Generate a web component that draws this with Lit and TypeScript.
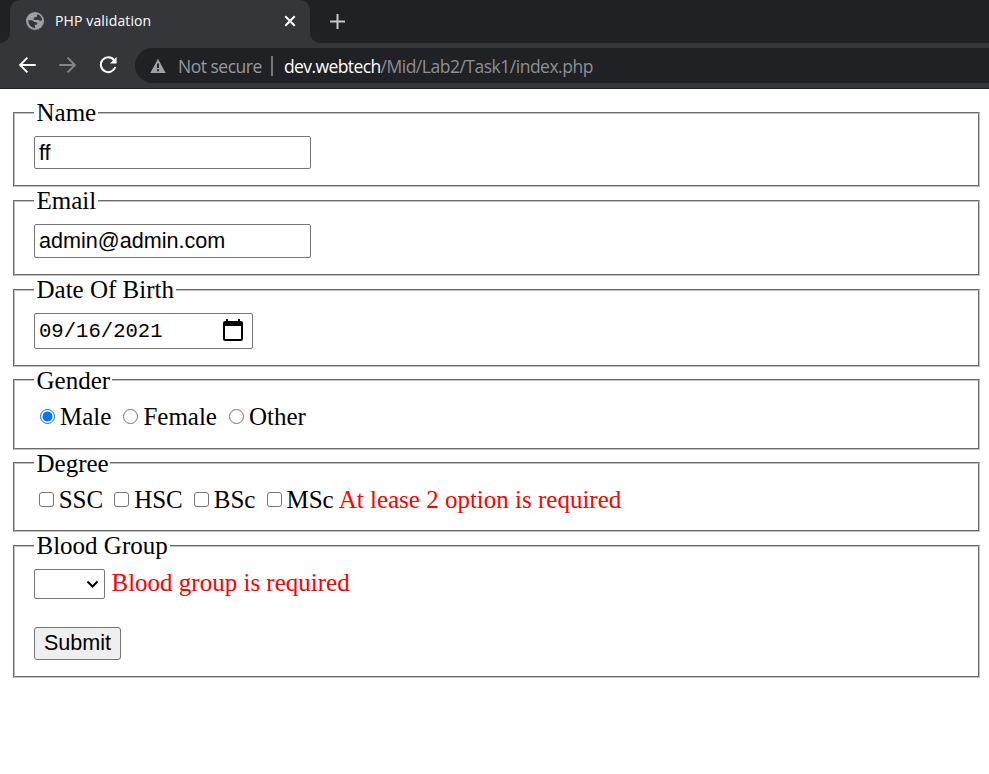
import { LitElement, html, css, svg } from "lit";
import { customElement } from "lit/decorators.js";

@customElement("browser-bar")
class BrowserBar extends LitElement {
  static styles = css`
    :host { display: block; height: 89px; background: #35363a; font-family: "Open Sans", sans-serif; }
    .tabs { height: 43px; display: flex; background: #202124; }
    .edge { width: 10px; background: #35363a; overflow: hidden; }
    .edge i { display: block; height: 43px; background: #202124; }
    .edge .l { border-bottom-right-radius: 10px; }
    .edge .r { border-bottom-left-radius: 10px; }
    .tab { box-sizing: border-box; width: 300px; background: #35363a; border-radius: 10px 10px 0 0; display: flex; align-items: center; padding: 0 13px 2px 15px; color: #fff; }
    .title { flex: 1; margin-left: 10px; font-size: 14px; letter-spacing: 0.13px; line-height: 20px; }
    svg { display: block; flex: none; }
    .plus { margin: 13px 0 0 9px; }
    .tools { display: flex; height: 45px; align-items: center; border-bottom: 1px solid #242528; padding-left: 18px; }
    .fwd { margin-left: 21px; }
    .reload { margin-left: 21px; }
    .omni { flex: 1; height: 35px; margin: 0 0 0 15px; background: #202124; border-radius: 18px 0 0 18px; display: flex; align-items: center; font-size: 17.5px; line-height: 26px; color: #8d9094; white-space: pre; }
    .warn { margin-left: 15px; }
    .ns { margin-left: 12px; width: 93px; color: #969a9f; letter-spacing: -0.5px; }
    .sep { width: 2px; height: 20px; background: #77797d; }
    .url { margin-left: 11px; letter-spacing: -0.49px; }
    .url b { font-weight: 400; color: #fff; letter-spacing: -0.6px; }
  `;
  render() {
    return html`
      <div class="tabs">
        <div class="edge"><i class="l"></i></div>
        <div class="tab">
          ${svg`<svg width="20" height="20" viewBox="0 0 20 20"><circle cx="10" cy="10" r="9" fill="#9aa0a6"/><path d="M12.4 3.2 Q16.4 4.5 17.2 8.9 L15.1 10 L13.2 8.7 L10.8 9 L8.2 8.5 L9.1 6.5 L11.6 6 Z M3 9.2 H7.1 L9.3 11 L12.1 11.4 L12.3 13.2 L9.7 14.2 L10.3 17.2 Q4.2 16.8 3 9.2Z" fill="#35363a"/></svg>`}
          <span class="title">PHP validation</span>
          ${svg`<svg width="14" height="14" viewBox="0 0 14 14"><path d="M2.3 2.3L11.7 11.7M11.7 2.3L2.3 11.7" stroke="#fff" stroke-width="2"/></svg>`}
        </div>
        <div class="edge"><i class="r"></i></div>
        ${svg`<svg class="plus" width="16" height="16" viewBox="0 0 16 16"><path d="M8.5 1V16M1 8.5H16" stroke="#c8c9cb" stroke-width="2"/></svg>`}
      </div>
      <div class="tools">
        ${svg`<svg width="19" height="19" viewBox="0 0 19 19"><path d="M17.7 9H2.8M9.4 1.7L2.1 9L9.4 16.3" fill="none" stroke="#fff" stroke-width="1.9"/></svg>`}
        ${svg`<svg class="fwd" width="19" height="19" viewBox="0 0 19 19"><path d="M1.3 9H16.2M9.6 1.7L16.9 9L9.6 16.3" fill="none" stroke="#85868a" stroke-width="1.9"/></svg>`}
        ${svg`<svg class="reload" width="22" height="19" viewBox="0 0 22 19"><path d="M16.1 4.2A7.4 7.4 0 1 0 17.3 11" fill="none" stroke="#fff" stroke-width="2"/><path d="M18.6 1V7.6H12Z" fill="#fff"/></svg>`}
        <div class="omni">
          ${svg`<svg class="warn" width="16" height="16" viewBox="0 0 16 16"><path d="M8 .8L15.7 15H.3Z" fill="#9aa0a6"/><path d="M8 5.6V10M8 11.3V13.2" stroke="#202124" stroke-width="1.9"/></svg>`}
          <span class="ns">Not secure</span><span class="sep"></span><span class="url"><b>dev.webtech</b>/Mid/Lab2/Task1/index.php</span>
        </div>
      </div>`;
  }
}

@customElement("app-root")
export class AppRoot extends LitElement {
  static styles = css`
    :host { display: block; height: 774px; overflow: hidden; background: #fff; color: #000; font: 25px/28px "Liberation Serif", serif; }
    form { padding: 11px 9px 0 13px; }
    fieldset { box-sizing: border-box; margin: 0; min-width: 0; border: 2px groove rgb(192, 192, 192); padding: 0 19px; }
    legend { height: 26px; line-height: 26px; padding: 0 1.8px 0 2.5px; white-space: nowrap; }
    .name { height: 87px; margin-bottom: 1px; }
    .email { height: 88px; margin-bottom: 1px; }
    .dob { height: 90px; }
    .gender { height: 83px; }
    .degree { height: 82px; margin-bottom: 1px; }
    .gender legend, .degree legend { line-height: 28px; }
    .blood { height: 145px; }
    input, button, .select, .date { box-sizing: border-box; display: block; margin: 0; border: 1px solid #767676; border-radius: 2px; background: #fff; color: #000; font: 21.6px "Liberation Sans", sans-serif; outline: 0; appearance: none; }
    .text { width: 277px; height: 34px; padding: 0 4px; margin-top: 10px; }
    .name .text { height: 33px; }
    .date { display: flex; align-items: center; width: 219px; height: 36px; margin-top: 10px; padding: 0 8px 0 4px; justify-content: space-between; font: 20.6px "Liberation Mono", monospace; white-space: pre; }
    .date svg { margin-bottom: 2px; }
    .row { display: flex; align-items: center; height: 28px; white-space: pre; }
    .gender .row { margin-top: 10px; padding-left: 6px; }
    .degree .row { margin-top: 10px; padding-left: 5px; }
    .row label { display: flex; align-items: center; }
    .row input { width: 15px; height: 15px; padding: 0; flex: none; margin-bottom: 2px; }
    .gender .radio { border-radius: 50%; margin-right: 5px; }
    .radio:checked { border-color: #0075ff; background: radial-gradient(circle, #0075ff 4.6px, #fff 5.3px); }
    .gender label + label { margin-left: 12px; }
    .degree .check { border-radius: 3px; margin-right: 4.7px; }
    .degree label + label { margin-left: 11.3px; }
    .error { color: #f00; margin-left: 6px; }
    .degree .error { margin-left: 5px; }
    .blood .row { margin-top: 10px; height: 30px; }
    .blood .error { line-height: 28px; margin: -2px 0 0 6.5px; }
    .select { width: 71px; height: 30px; display: flex; align-items: center; justify-content: flex-end; padding-right: 5px; }
    button { width: 87px; height: 33px; margin-top: 28px; padding: 0 0 2px; background: #efefef; border-radius: 3px; line-height: 29px; }
    svg { display: block; }
  `;
  render() {
    return html`
      <browser-bar></browser-bar>
      <form>
        <fieldset class="name"><legend>Name</legend><input class="text" .value=${"ff"}></fieldset>
        <fieldset class="email"><legend>Email</legend><input class="text" .value=${"admin@admin.com"}></fieldset>
        <fieldset class="dob"><legend>Date Of Birth</legend>
          <div class="date"><span>09/16/2021</span>
            ${svg`<svg width="22" height="24" viewBox="0 0 22 24"><path fill-rule="evenodd" d="M4 1H6V3H16V1H18V3H19Q21 3 21 5V21Q21 23 19 23H3Q1 23 1 21V5Q1 3 3 3H4ZM3 8V21H19V8Z"/></svg>`}
          </div></fieldset>
        <fieldset class="gender"><legend>Gender</legend><div class="row">
          ${["Male", "Female", "Other"].map((t, i) => html`<label><input class="radio" type="radio" name="g" .checked=${i === 0}>${t}</label>`)}
        </div></fieldset>
        <fieldset class="degree"><legend>Degree</legend><div class="row">
          ${["SSC", "HSC", "BSc", "MSc"].map((t) => html`<label><input class="check" type="checkbox">${t}</label>`)}<span class="error">At lease 2 option is required</span>
        </div></fieldset>
        <fieldset class="blood"><legend>Blood Group</legend>
          <div class="row"><div class="select">${svg`<svg width="13" height="9" viewBox="0 0 13 9"><path d="M1.5 1.5L6.5 6.5L11.5 1.5" fill="none" stroke="#000" stroke-width="2"/></svg>`}</div><span class="error">Blood group is required</span></div>
          <button type="button">Submit</button>
        </fieldset>
      </form>`;
  }
}
